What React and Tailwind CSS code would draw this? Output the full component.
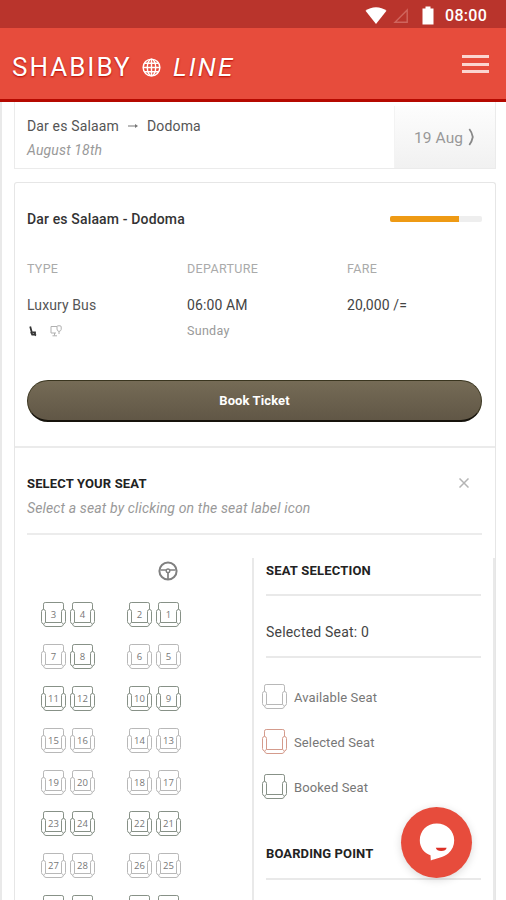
const SEAT_COLORS = {
  booked: '#879187',
  available: '#b8b8b8',
  selected: '#d49b8c',
}

const ROWS = [
  [[3, 'booked'], [4, 'booked'], [2, 'booked'], [1, 'booked']],
  [[7, 'available'], [8, 'booked'], [6, 'available'], [5, 'available']],
  [[11, 'booked'], [12, 'booked'], [10, 'booked'], [9, 'booked']],
  [[15, 'available'], [16, 'available'], [14, 'available'], [13, 'available']],
  [[19, 'available'], [20, 'available'], [18, 'available'], [17, 'available']],
  [[23, 'booked'], [24, 'booked'], [22, 'booked'], [21, 'booked']],
  [[27, 'available'], [28, 'available'], [26, 'available'], [25, 'available']],
]

function Seat({ label, status }) {
  return (
    <svg viewBox="0 0 25 25" className="block h-[25px] w-[25px] shrink-0" fill="none" stroke={SEAT_COLORS[status]} strokeWidth="1">
      <path d="M2.5 7.5V2.2Q2.5 .5 4.2 .5H20.8Q22.5 .5 22.5 2.2V7.5" />
      <path d="M4.5 20.5V9.5Q4.5 7.5 2.5 7.5Q.5 7.5 .5 9.5V19.5Q.5 21.5 2.5 22L4.5 20.5H20.5L22.5 22Q24.5 21.5 24.5 19.5V9.5Q24.5 7.5 22.5 7.5Q20.5 7.5 20.5 9.5V20.5" />
      <path d="M2.5 22Q3 24.5 5 24.5H20Q22 24.5 22.5 22" />
      {label && (
        <text x="12.5" y="15.5" textAnchor="middle" fontSize="9.5" stroke="none" fill="#777" className="font-['Open_Sans',sans-serif]">
          {label}
        </text>
      )}
    </svg>
  )
}

function SteeringWheel() {
  return (
    <svg viewBox="0 0 20 20" className="block h-5 w-5" fill="none" stroke="#808080" strokeWidth="2">
      <circle cx="10" cy="10" r="8.6" />
      <circle cx="10" cy="9.8" r="1.8" strokeWidth="1.4" />
      <path d="M2.5 9H8M12 9H17.5M10 12V18" strokeWidth="1.7" />
    </svg>
  )
}

function StatusBar() {
  return (
    <div className="flex h-[28px] shrink-0 items-center bg-[#b9342c] pl-[365px]">
      <svg viewBox="0 0 22 18" className="mt-px h-[18px] w-[22px]" fill="#fff">
        <path d="M.5 4.8Q5 1.2 11 1.2T21.5 4.8L11 18Z" />
      </svg>
      <svg viewBox="0 0 16 16" className="mt-[3px] ml-[6px] h-4 w-4" fill="none" stroke="#d0655d" strokeWidth="1.4">
        <path d="M14.2 2V14.2H2Z" />
      </svg>
      <svg viewBox="0 0 12 19" className="mt-[2px] ml-[13px] h-[19px] w-3" fill="#fff">
        <path d="M3.5 .5H8.5V2.5H11.5V18.5H.5V2.5H3.5Z" />
      </svg>
      <span className="mt-[4px] ml-[11px] text-[16px] leading-none font-medium tracking-[0.3px] text-white">08:00</span>
    </div>
  )
}

function Header() {
  return (
    <header className="flex h-[74px] shrink-0 items-center justify-between border-b-[3px] border-[#b50900] bg-[#e74c3c] pr-[17px] pl-3">
      <div className="flex items-center pt-[6px] text-[26px] leading-none text-white [text-shadow:0_1px_2px_#b50900]">
        <span className="w-[130px] tracking-[2px]">SHABIBY</span>
        <svg viewBox="0 0 20 20" className="h-5 w-[19px]" fill="none" stroke="#fff" strokeWidth="1.5">
          <g transform="translate(0 .5)">
            <circle cx="10" cy="10" r="8.8" />
            <ellipse cx="10" cy="10" rx="4.4" ry="8.8" />
            <path d="M10 1V19M1 10H19M2.5 5.5H17.5M2.5 14.5H17.5" />
          </g>
        </svg>
        <span className="ml-[12px] tracking-[2.2px] italic">LINE</span>
      </div>
      <div className="mt-px flex w-[27px] flex-col gap-[4.5px]">
        <span className="h-[3px] bg-[#fbd5d0]" />
        <span className="h-[3px] bg-[#fbd5d0]" />
        <span className="h-[3px] bg-[#fbd5d0]" />
      </div>
    </header>
  )
}

function RouteBar() {
  return (
    <section className="flex h-[67px] shrink-0 border border-t-0 border-[#ebebeb] pt-[4px]">
      <div className="flex-1 pt-[11px] pl-3 text-[14px] leading-[18px]">
        <div className="flex items-center tracking-[0.15px] text-[#555]">
          <span className="w-[100px]">Dar es Salaam</span>
          <svg viewBox="0 0 12 8" className="h-2 w-[12px]" fill="#777">
            <path d="M1 3.5H8V2L11 4L8 6V4.5H1Z" />
          </svg>
          <span className="ml-[8px]">Dodoma</span>
        </div>
        <div className="mt-[6px] tracking-[0.15px] text-[#999] italic">August 18th</div>
      </div>
      <div className="flex w-[101px] items-center border-l border-[#f3f3f3] bg-linear-to-b from-[#fdfdfd] to-[#f1f1f1] pb-px pl-[19px] text-[15.5px] text-[#999]">
        <span className="w-[54px] pt-[4px] tracking-[0.1px] whitespace-nowrap">19 Aug</span>
        <svg viewBox="0 0 7 18" className="h-[18px] w-[7px]" fill="none" stroke="#888" strokeWidth="1.8">
          <path d="M1.3 1Q3.8 4 4.8 9Q3.8 14 1.3 17" />
        </svg>
      </div>
    </section>
  )
}

function TripDetails() {
  return (
    <div className="flex h-[265px] shrink-0 flex-col border-b-2 border-[#ebebeb] pr-[13px] pl-3">
      <div className="flex items-center justify-between pt-[27px]">
        <h2 className="text-[14px] leading-[18px] font-medium tracking-[0.15px] text-[#333]">Dar es Salaam - Dodoma</h2>
        <div className="h-[6px] w-[92px] overflow-hidden rounded-[2px] bg-[#eee]">
          <div className="h-full w-[69px] bg-[#ee9a14]" />
        </div>
      </div>
      <div className="mt-[34px] grid grid-cols-[160px_160px_1fr]">
        <div>
          <div className="text-[12.5px] leading-[14px] tracking-[0.3px] text-[#aaa]">TYPE</div>
          <div className="mt-[20px] text-[14px] leading-[18px] tracking-[0.1px] text-[#555]">Luxury Bus</div>
          <div className="mt-[11px] flex items-center pl-[2px]">
            <svg viewBox="0 0 9 11" className="h-[11px] w-[9px]" fill="none" stroke="#333" strokeWidth="1.8">
              <path d="M1.2 .5L2.8 6.5M2 5.8L3.2 8.6H5.5L7 9.5M3.5 6.3H6V9" />
            </svg>
            <svg viewBox="0 0 12 12" className="ml-[12px] h-3 w-3" fill="none" stroke="#b0b0b0" strokeWidth="1">
              <path d="M6 8H1V1.5H7M4.5 8V10.5M2.5 10.8H7M7 1.5Q7 .8 8 .8H10Q11.2 .8 11.2 2V4.5Q11 6 9 6.5Q7 6 7 4ZM9 6.5V9" />
            </svg>
          </div>
        </div>
        <div>
          <div className="text-[12.5px] leading-[14px] tracking-[0.35px] text-[#aaa]">DEPARTURE</div>
          <div className="mt-[20px] text-[14px] leading-[18px] tracking-[0.1px] text-[#444]">06:00 AM</div>
          <div className="mt-[9px] text-[12.5px] leading-[16px] tracking-[0.3px] text-[#999]">Sunday</div>
        </div>
        <div>
          <div className="text-[12.5px] leading-[14px] tracking-[0.3px] text-[#aaa]">FARE</div>
          <div className="mt-[20px] text-[14px] leading-[18px] tracking-[0.1px] text-[#444]">20,000 /=</div>
        </div>
      </div>
      <button
        type="button"
        className="mt-[41px] h-[42px] w-full shrink-0 rounded-full border border-b-2 border-[#3a351f] border-b-[#16130c] bg-linear-to-b from-[#756b56] to-[#615746] pt-px text-[13px] font-bold tracking-[0.1px] text-white"
      >
        Book Ticket
      </button>
    </div>
  )
}

function SeatMap() {
  return (
    <div className="w-[225px] shrink-0 pl-[14px]">
      <div className="mt-[3px] ml-[117px]">
        <SteeringWheel />
      </div>
      <div className="mt-[21px] flex flex-col gap-[16.9px]">
        {ROWS.map(row => (
          <div key={row[0][0]} className="flex">
            <div className="flex w-[86px] gap-[4px]">
              {row.slice(0, 2).map(([n, status]) => <Seat key={n} label={n} status={status} />)}
            </div>
            <div className="flex gap-[4px]">
              {row.slice(2).map(([n, status]) => <Seat key={n} label={n} status={status} />)}
            </div>
          </div>
        ))}
        {/* last row runs under the fold */}
        <div className="flex">
          <div className="flex w-[86px] gap-[4px]">
            <Seat status="booked" />
            <Seat status="booked" />
          </div>
          <div className="flex gap-[4px]">
            <Seat status="booked" />
            <Seat status="booked" />
          </div>
        </div>
      </div>
    </div>
  )
}

function LegendItem({ status, label }) {
  return (
    <div className="flex h-[25px] items-center gap-[7px]">
      <Seat status={status} />
      <span className="pt-[3px] text-[13px] tracking-[0.12px] text-[#777]">{label}</span>
    </div>
  )
}

function SeatSelection() {
  return (
    <div className="flex-1 border-r-2 border-l-2 border-[#e9e9e9] pr-[12px] pl-[12px]">
      <h3 className="flex h-[38px] items-center border-b-2 border-[#e9e9e9] pb-[10px] text-[13px] font-bold tracking-[0.2px] text-[#222]">
        SEAT SELECTION
      </h3>
      <div className="flex h-[62px] items-center border-b-2 border-[#e9e9e9] pt-[12px] text-[14px] tracking-[0.2px] text-[#444]">
        Selected Seat: 0
      </div>
      <div className="-ml-[4px] flex flex-col gap-[20px] pt-[26px]">
        <LegendItem status="available" label="Available Seat" />
        <LegendItem status="selected" label="Selected Seat" />
        <LegendItem status="booked" label="Booked Seat" />
      </div>
      <h3 className="mt-[43px] flex h-[38px] items-center border-b-2 border-[#e9e9e9] pb-[12px] text-[13px] font-bold tracking-[0.1px] text-[#222]">
        BOARDING POINT
      </h3>
    </div>
  )
}

function ChatButton() {
  return (
    <button
      type="button"
      aria-label="Chat"
      className="absolute top-[807px] left-[401px] flex h-[71px] w-[71px] items-center justify-center rounded-full bg-[#e74c3c] shadow-[0_2px_8px_rgba(0,0,0,0.15)]"
    >
      <svg viewBox="0 0 36 38" className="-mt-[2px] h-[38px] w-9">
        <path d="M17.8 .5C8 .5 .8 7.8 .8 17.3C.8 24.5 5 30.2 11.5 32.3L11.8 37.5C16 35.4 24.5 34.5 29.5 30.2C33.2 27 35.2 22.3 35.2 17.3C35.2 7.8 27.5 .5 17.8 .5Z" fill="#fff" />
        <path d="M16.8 24.8H27.6Q27 28 22.2 28Q17.8 28 16.8 24.8Z" fill="#dc2f25" />
      </svg>
    </button>
  )
}

export default function App() {
  return (
    <div className="relative flex h-[900px] w-[506px] flex-col overflow-hidden bg-white font-[Roboto,sans-serif]">
      <StatusBar />
      <Header />
      <main className="flex min-h-0 flex-1 flex-col border-l-2 border-[#e9e9e9] pr-[10px] pl-3">
        <RouteBar />
        <section className="mt-[13px] flex flex-1 flex-col rounded-t-[3px] border border-b-0 border-[#e6e6e6] bg-white">
          <TripDetails />
          <div className="mr-[13px] ml-3 h-[87px] shrink-0 border-b-2 border-[#ececec] pt-[27px]">
            <div className="flex items-center justify-between">
              <h2 className="text-[13px] leading-[18px] font-bold tracking-[0.15px] text-[#222]">SELECT YOUR SEAT</h2>
              <svg viewBox="0 0 10 10" className="mr-[13px] mb-[2px] h-[10px] w-[10px]" stroke="#b4b4b4" strokeWidth="1.5">
                <path d="M.5 .5L9.5 9.5M9.5 .5L.5 9.5" />
              </svg>
            </div>
            <p className="mt-[6px] text-[14px] leading-[18px] tracking-[0.14px] text-[#999] italic">
              Select a seat by clicking on the seat label icon
            </p>
          </div>
          <div className="mt-[23px] flex pl-3">
            <SeatMap />
            <SeatSelection />
          </div>
        </section>
      </main>
      <ChatButton />
    </div>
  )
}
